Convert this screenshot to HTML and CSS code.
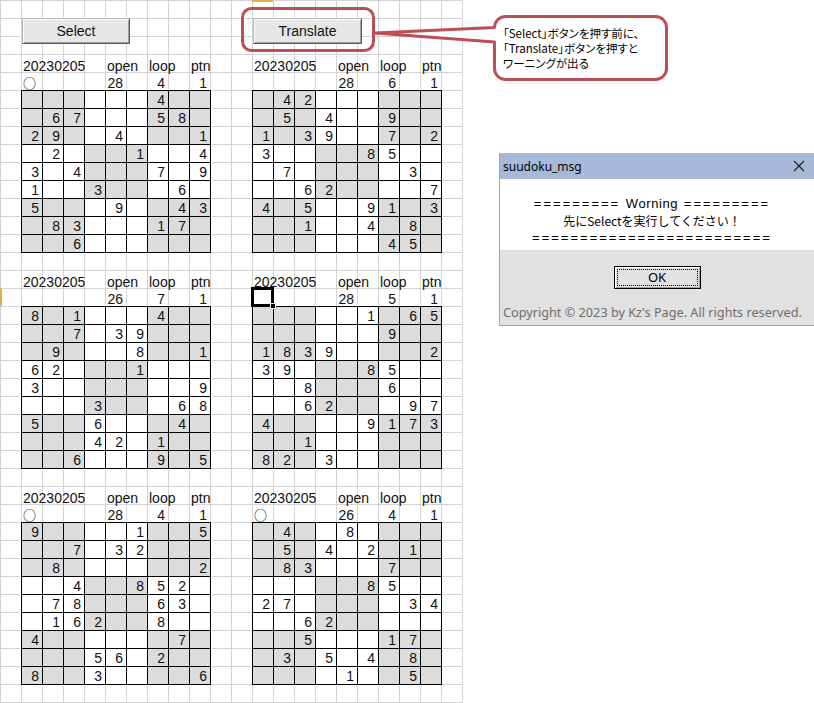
FILE: index.html
```html
<!DOCTYPE html>
<html lang="ja">
<head>
<meta charset="utf-8">
<title>suudoku</title>
<link rel="stylesheet" href="styles.css">
</head>
<body>
<div class="page">
  <div class="sheet">
    <div class="btns">
      <div class="btn btn-select">Select</div>
      <div class="btn btn-translate">Translate</div>
    </div>
    <div class="boards">
      <!-- board 1 -->
      <div class="puz">
        <div class="hd"><span class="c1">20230205</span><span class="c5">open</span><span class="c7">loop</span><span class="c9">ptn</span></div>
        <div class="info"><span class="c1 circ">○</span><span class="c5 num">28</span><span class="c7 num">4</span><span class="c9 num">1</span></div>
        <div class="board">
          <div class="r"><i></i><i></i><i></i><i></i><i></i><i></i><i>4</i><i></i><i></i></div>
          <div class="r"><i></i><i>6</i><i>7</i><i></i><i></i><i></i><i>5</i><i>8</i><i></i></div>
          <div class="r"><i>2</i><i>9</i><i></i><i></i><i>4</i><i></i><i></i><i></i><i>1</i></div>
          <div class="r"><i></i><i>2</i><i></i><i></i><i></i><i>1</i><i></i><i></i><i>4</i></div>
          <div class="r"><i>3</i><i></i><i>4</i><i></i><i></i><i></i><i>7</i><i></i><i>9</i></div>
          <div class="r"><i>1</i><i></i><i></i><i>3</i><i></i><i></i><i></i><i>6</i><i></i></div>
          <div class="r"><i>5</i><i></i><i></i><i></i><i>9</i><i></i><i></i><i>4</i><i>3</i></div>
          <div class="r"><i></i><i>8</i><i>3</i><i></i><i></i><i></i><i>1</i><i>7</i><i></i></div>
          <div class="r"><i></i><i></i><i>6</i><i></i><i></i><i></i><i></i><i></i><i></i></div>
        </div>
      </div>
      <!-- board 2 -->
      <div class="puz">
        <div class="hd"><span class="c1">20230205</span><span class="c5">open</span><span class="c7">loop</span><span class="c9">ptn</span></div>
        <div class="info"><span class="c5 num">28</span><span class="c7 num">6</span><span class="c9 num">1</span></div>
        <div class="board">
          <div class="r"><i></i><i>4</i><i>2</i><i></i><i></i><i></i><i></i><i></i><i></i></div>
          <div class="r"><i></i><i>5</i><i></i><i>4</i><i></i><i></i><i>9</i><i></i><i></i></div>
          <div class="r"><i>1</i><i></i><i>3</i><i>9</i><i></i><i></i><i>7</i><i></i><i>2</i></div>
          <div class="r"><i>3</i><i></i><i></i><i></i><i></i><i>8</i><i>5</i><i></i><i></i></div>
          <div class="r"><i></i><i>7</i><i></i><i></i><i></i><i></i><i></i><i>3</i><i></i></div>
          <div class="r"><i></i><i></i><i>6</i><i>2</i><i></i><i></i><i></i><i></i><i>7</i></div>
          <div class="r"><i>4</i><i></i><i>5</i><i></i><i></i><i>9</i><i>1</i><i></i><i>3</i></div>
          <div class="r"><i></i><i></i><i>1</i><i></i><i></i><i>4</i><i></i><i>8</i><i></i></div>
          <div class="r"><i></i><i></i><i></i><i></i><i></i><i></i><i>4</i><i>5</i><i></i></div>
        </div>
      </div>
      <!-- board 3 -->
      <div class="puz">
        <div class="hd"><span class="c1">20230205</span><span class="c5">open</span><span class="c7">loop</span><span class="c9">ptn</span></div>
        <div class="info"><span class="c5 num">26</span><span class="c7 num">7</span><span class="c9 num">1</span></div>
        <div class="board">
          <div class="r"><i>8</i><i></i><i>1</i><i></i><i></i><i></i><i>4</i><i></i><i></i></div>
          <div class="r"><i></i><i></i><i>7</i><i></i><i>3</i><i>9</i><i></i><i></i><i></i></div>
          <div class="r"><i></i><i>9</i><i></i><i></i><i></i><i>8</i><i></i><i></i><i>1</i></div>
          <div class="r"><i>6</i><i>2</i><i></i><i></i><i></i><i>1</i><i></i><i></i><i></i></div>
          <div class="r"><i>3</i><i></i><i></i><i></i><i></i><i></i><i></i><i></i><i>9</i></div>
          <div class="r"><i></i><i></i><i></i><i>3</i><i></i><i></i><i></i><i>6</i><i>8</i></div>
          <div class="r"><i>5</i><i></i><i></i><i>6</i><i></i><i></i><i></i><i>4</i><i></i></div>
          <div class="r"><i></i><i></i><i></i><i>4</i><i>2</i><i></i><i>1</i><i></i><i></i></div>
          <div class="r"><i></i><i></i><i>6</i><i></i><i></i><i></i><i>9</i><i></i><i>5</i></div>
        </div>
      </div>
      <!-- board 4 -->
      <div class="puz">
        <div class="hd"><span class="c1">20230205</span><span class="c5">open</span><span class="c7">loop</span><span class="c9">ptn</span></div>
        <div class="info"><span class="c1 act"></span><span class="c5 num">28</span><span class="c7 num">5</span><span class="c9 num">1</span></div>
        <div class="board">
          <div class="r"><i></i><i></i><i></i><i></i><i></i><i>1</i><i></i><i>6</i><i>5</i></div>
          <div class="r"><i></i><i></i><i></i><i></i><i></i><i></i><i>9</i><i></i><i></i></div>
          <div class="r"><i>1</i><i>8</i><i>3</i><i>9</i><i></i><i></i><i></i><i></i><i>2</i></div>
          <div class="r"><i>3</i><i>9</i><i></i><i></i><i></i><i>8</i><i>5</i><i></i><i></i></div>
          <div class="r"><i></i><i></i><i>8</i><i></i><i></i><i></i><i>6</i><i></i><i></i></div>
          <div class="r"><i></i><i></i><i>6</i><i>2</i><i></i><i></i><i></i><i>9</i><i>7</i></div>
          <div class="r"><i>4</i><i></i><i></i><i></i><i></i><i>9</i><i>1</i><i>7</i><i>3</i></div>
          <div class="r"><i></i><i></i><i>1</i><i></i><i></i><i></i><i></i><i></i><i></i></div>
          <div class="r"><i>8</i><i>2</i><i></i><i>3</i><i></i><i></i><i></i><i></i><i></i></div>
        </div>
      </div>
      <!-- board 5 -->
      <div class="puz">
        <div class="hd"><span class="c1">20230205</span><span class="c5">open</span><span class="c7">loop</span><span class="c9">ptn</span></div>
        <div class="info"><span class="c1 circ">○</span><span class="c5 num">28</span><span class="c7 num">4</span><span class="c9 num">1</span></div>
        <div class="board">
          <div class="r"><i>9</i><i></i><i></i><i></i><i></i><i>1</i><i></i><i></i><i>5</i></div>
          <div class="r"><i></i><i></i><i>7</i><i></i><i>3</i><i>2</i><i></i><i></i><i></i></div>
          <div class="r"><i></i><i>8</i><i></i><i></i><i></i><i></i><i></i><i></i><i>2</i></div>
          <div class="r"><i></i><i></i><i>4</i><i></i><i></i><i>8</i><i>5</i><i>2</i><i></i></div>
          <div class="r"><i></i><i>7</i><i>8</i><i></i><i></i><i></i><i>6</i><i>3</i><i></i></div>
          <div class="r"><i></i><i>1</i><i>6</i><i>2</i><i></i><i></i><i>8</i><i></i><i></i></div>
          <div class="r"><i>4</i><i></i><i></i><i></i><i></i><i></i><i></i><i>7</i><i></i></div>
          <div class="r"><i></i><i></i><i></i><i>5</i><i>6</i><i></i><i>2</i><i></i><i></i></div>
          <div class="r"><i>8</i><i></i><i></i><i>3</i><i></i><i></i><i></i><i></i><i>6</i></div>
        </div>
      </div>
      <!-- board 6 -->
      <div class="puz">
        <div class="hd"><span class="c1">20230205</span><span class="c5">open</span><span class="c7">loop</span><span class="c9">ptn</span></div>
        <div class="info"><span class="c1 circ">○</span><span class="c5 num">26</span><span class="c7 num">4</span><span class="c9 num">1</span></div>
        <div class="board">
          <div class="r"><i></i><i>4</i><i></i><i></i><i>8</i><i></i><i></i><i></i><i></i></div>
          <div class="r"><i></i><i>5</i><i></i><i>4</i><i></i><i>2</i><i></i><i>1</i><i></i></div>
          <div class="r"><i></i><i>8</i><i>3</i><i></i><i></i><i></i><i>7</i><i></i><i></i></div>
          <div class="r"><i></i><i></i><i></i><i></i><i></i><i>8</i><i>5</i><i></i><i></i></div>
          <div class="r"><i>2</i><i>7</i><i></i><i></i><i></i><i></i><i></i><i>3</i><i>4</i></div>
          <div class="r"><i></i><i></i><i>6</i><i>2</i><i></i><i></i><i></i><i></i><i></i></div>
          <div class="r"><i></i><i></i><i>5</i><i></i><i></i><i></i><i>1</i><i>7</i><i></i></div>
          <div class="r"><i></i><i>3</i><i></i><i>5</i><i></i><i>4</i><i></i><i>8</i><i></i></div>
          <div class="r"><i></i><i></i><i></i><i></i><i>1</i><i></i><i></i><i>5</i><i></i></div>
        </div>
      </div>
    </div>
  </div>

  <div class="side">
    <div class="dlg">
      <div class="dlg-title">
        <span>suudoku_msg</span>
        <svg class="close" width="12" height="12" viewBox="0 0 12 12"><path d="M1 1 L11 11 M11 1 L1 11" stroke="#1a1a1a" stroke-width="1.1" fill="none"/></svg>
      </div>
      <div class="dlg-body">
        <p class="lat"><span class="eq">=========</span> <span class="word">Worning</span> <span class="eq">=========</span></p>
        <p class="jp">先にSelectを実行してください！</p>
        <p class="lat"><span class="eq">=========================</span></p>
      </div>
      <div class="dlg-foot">
        <div class="ok"><span>OK</span></div>
        <p class="copy">Copyright © 2023 by Kz's Page. All rights reserved.</p>
      </div>
    </div>
  </div>
</div>

<div class="hl hl-col"></div>
<div class="hl hl-row"></div>

<svg class="shapes" width="814" height="90" viewBox="0 0 814 90">
  <rect x="242.5" y="8.5" width="131" height="42" rx="9" ry="9" fill="none" stroke="#bc4f55" stroke-width="3"/>
  <path d="M494.5,27.5 A11,11 0 0 1 505.5,16.5 H655.5 A11,11 0 0 1 666.5,27.5 V68.5 A11,11 0 0 1 655.5,79.5 H505.5 A11,11 0 0 1 494.5,68.5 V42 L375,33 Z" fill="#fff" stroke="#bc4f55" stroke-width="3" stroke-linejoin="round"/>
</svg>
<div class="note">
  <p>「Select」ボタンを押す前に、</p>
  <p>「Translate」ボタンを押すと</p>
  <p>ワーニングが出る</p>
</div>
</body>
</html>
```

FILE: styles.css
```css
html, body {
  margin: 0;
  padding: 0;
}
body {
  width: 814px;
  height: 703px;
  overflow: hidden;
  position: relative;
  background: #fff;
  font-family: "Liberation Sans", Arial, sans-serif;
  font-size: 14px;
  color: #111;
}
p { margin: 0; }

.page {
  display: flex;
  align-items: flex-start;
}

/* spreadsheet area */
.sheet {
  flex: none;
  width: 463px;
  height: 703px;
  box-sizing: border-box;
  padding: 18px 0 0 21px;
  background-image:
    linear-gradient(to right, #d4d4d4 1px, transparent 1px),
    linear-gradient(to bottom, #d4d4d4 1px, transparent 1px);
  background-size: 21px 18px;
}

.btns {
  display: grid;
  grid-template-columns: 190px 190px;
  column-gap: 41px;
  height: 36px;
  align-items: start;
}
.btn {
  margin-left: 1px;
  height: 26px;
  box-sizing: border-box;
  background: #e6e6e6;
  border-top: 1px solid #b4b4b4;
  border-left: 1px solid #b4b4b4;
  border-right: 1px solid #5a5a5a;
  border-bottom: 1px solid #5a5a5a;
  box-shadow: inset 1px 1px 0 #fbfbfb, inset -1px -1px 0 #a0a0a0;
  text-align: center;
  line-height: 24px;
  font-size: 14px;
}
.btn-select { width: 108px; }
.btn-translate { width: 109px; }

.boards {
  display: grid;
  grid-template-columns: 190px 190px;
  column-gap: 41px;
  row-gap: 17px;
}

.hd, .info {
  display: grid;
  grid-template-columns: repeat(9, 21px);
  grid-template-rows: 18px;
  height: 18px;
  white-space: nowrap;
}
.hd span, .info span { grid-row: 1; }
.hd span {
  padding: 4px 0 0 2px;
  line-height: 16px;
}
.info span {
  padding-top: 3px;
  line-height: 16px;
}
.c1 { grid-column: 1; }
.c5 { grid-column: 5; }
.c7 { grid-column: 7; }
.c9 { grid-column: 9; }
.num {
  text-align: right;
  padding-right: 3px;
}
.info .circ {
  font-family: "Noto Sans CJK JP", sans-serif;
  font-size: 13px;
  line-height: 16px;
  padding: 3px 0 0 2px;
}
.info .act {
  position: relative;
  outline: 3px solid #000;
  outline-offset: -2px;
}
.info .act::after {
  content: "";
  position: absolute;
  left: 18px;
  top: 15px;
  width: 4px;
  height: 4px;
  background: #000;
  border: 1px solid #fff;
}

/* sudoku board */
.board {
  width: 190px;
  box-sizing: border-box;
  padding: 1px;
  background: #000;
  display: flex;
  flex-direction: column;
  gap: 1px;
}
.r {
  display: grid;
  grid-template-columns: repeat(9, 20px);
  grid-template-rows: 17px;
  gap: 1px;
}
.r i {
  font-style: normal;
  background: #fff;
  text-align: right;
  padding-right: 3px;
  line-height: 18px;
  font-size: 14px;
}
.r:nth-child(-n+3) i:nth-child(-n+3),
.r:nth-child(-n+3) i:nth-child(n+7),
.r:nth-child(n+7) i:nth-child(-n+3),
.r:nth-child(n+7) i:nth-child(n+7),
.r:nth-child(n+4):nth-child(-n+6) i:nth-child(n+4):nth-child(-n+6) {
  background: #dcdcdc;
}

/* header highlight marks */
.hl {
  position: absolute;
  background: #e0ad4f;
}
.hl-col { left: 252px; top: 0; width: 21px; height: 2px; }
.hl-row { left: 0; top: 288px; width: 2px; height: 18px; }

/* dialog */
.side {
  flex: none;
  padding: 153px 0 0 36px;
}
.dlg {
  width: 314px;
  border: 1px solid #a4a4a4;
  border-top: none;
  background: #e1e1e1;
  font-family: "Noto Sans", sans-serif;
}
.dlg-title {
  height: 26px;
  background: #a6b9d9;
  display: flex;
  align-items: center;
  justify-content: space-between;
  padding: 0 9px 0 3px;
  font-size: 12px;
  color: #000;
}
.close { display: block; }
.dlg-body {
  height: 71px;
  box-sizing: border-box;
  background: #fff;
  padding: 16px 10px 0 0;
  text-align: center;
  line-height: 17px;
  color: #000;
  white-space: nowrap;
}
.dlg-body .lat {
  font-family: "Liberation Sans", Arial, sans-serif;
  font-size: 13px;
}
.dlg-body .eq {
  letter-spacing: 2px;
}
.dlg-body .word {
  letter-spacing: 0.6px;
  padding: 0 2px;
}
.dlg-body .jp {
  font-family: "Noto Sans CJK JP", sans-serif;
  font-size: 12px;
}
.dlg-foot {
  height: 75px;
  box-sizing: border-box;
  padding-top: 16px;
  display: flex;
  flex-direction: column;
  align-items: center;
}
.ok {
  width: 87px;
  height: 23px;
  box-sizing: border-box;
  border: 1px solid #000;
  background: #e1e1e1;
  box-shadow: inset 1px 1px 0 #fff, inset -1px -1px 0 #a0a0a0;
  padding: 2px;
}
.ok span {
  display: block;
  height: 17px;
  box-sizing: border-box;
  border: 1px dotted #000;
  text-align: center;
  font-size: 13px;
  line-height: 15px;
  color: #000;
}
.copy {
  align-self: stretch;
  padding: 15px 0 0 3px;
  font-size: 12.7px;
  line-height: 16px;
  color: #6e6e6e;
  white-space: nowrap;
}

/* callout */
.shapes {
  position: absolute;
  left: 0;
  top: 0;
  pointer-events: none;
}
.note {
  position: absolute;
  left: 503px;
  top: 26px;
  font-family: "Noto Sans CJK JP", sans-serif;
  font-size: 11.5px;
  line-height: 15px;
  font-feature-settings: "palt";
  color: #000;
}
```
